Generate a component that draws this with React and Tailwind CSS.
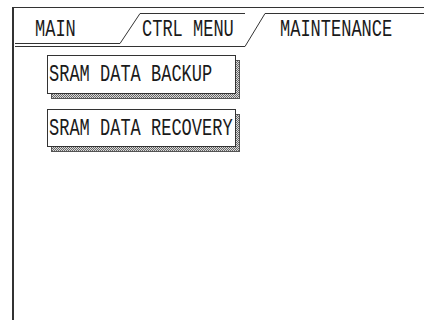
import React from 'react';

const FONT = { fontFamily: '"Liberation Mono", "DejaVu Sans Mono", monospace' };

function Label({ children, className = '' }) {
  return (
    <span
      className={`inline-block origin-center scale-y-[1.4] whitespace-pre text-[17px] leading-none text-[#1a1a1a] ${className}`}
      style={FONT}
    >
      {children}
    </span>
  );
}

function Slash({ from, to, base }) {
  return (
    <svg width="20" height="39" viewBox="0 0 20 39" className="shrink-0 block">
      <line x1="0" y1={from} x2="20" y2={to} stroke="#333" strokeWidth="1" />
      {base && <line x1="0" y1="38.5" x2="20" y2="38.5" stroke="#333" strokeWidth="1" />}
    </svg>
  );
}

function PanelButton({ label, h }) {
  return (
    <div className="relative w-[189px]" style={{ height: h }}>
      <div className="absolute left-[4px] top-[5px] h-full w-full border border-[#555] bg-[repeating-conic-gradient(#666_0_25%,#dcdcdc_0_50%)] bg-size-[2px_2px]" />
      <div className="relative flex h-full w-full items-center overflow-visible border border-[#333] bg-white pl-px">
        <Label>{label}</Label>
      </div>
    </div>
  );
}

export default function App() {
  return (
    <div className="h-[320px] w-[424px] overflow-hidden bg-white pl-[12px] pt-[7px]">
      <div className="flex h-[330px] flex-col border-l-2 border-t border-[#333]">
        {/* tab header */}
        <div className="flex h-[39px] items-stretch">
          <div className="ml-px flex w-[105px] flex-col border-b border-[#333]">
            <div className="flex h-[36px] items-end border-b border-[#333] pb-[5px] pl-[20px]">
              <Label>MAIN</Label>
            </div>
          </div>
          <Slash from={35.5} to={5.5} base />
          <div className="mt-[5px] flex w-[105px] items-end border-b border-t border-[#333] pb-[8px] pl-[2px]">
            <Label>CTRL MENU</Label>
          </div>
          <Slash from={38.5} to={5.5} />
          <div className="mt-[5px] flex flex-1 items-end border-t border-[#333] pb-[9px] pl-[15px]">
            <Label>MAINTENANCE</Label>
          </div>
        </div>

        {/* content */}
        <div className="flex flex-col gap-[15px] pl-[33px] pt-[8px]">
          <PanelButton label="SRAM DATA BACKUP" h={39} />
          <PanelButton label="SRAM DATA RECOVERY" h={38} />
        </div>
      </div>
    </div>
  );
}
